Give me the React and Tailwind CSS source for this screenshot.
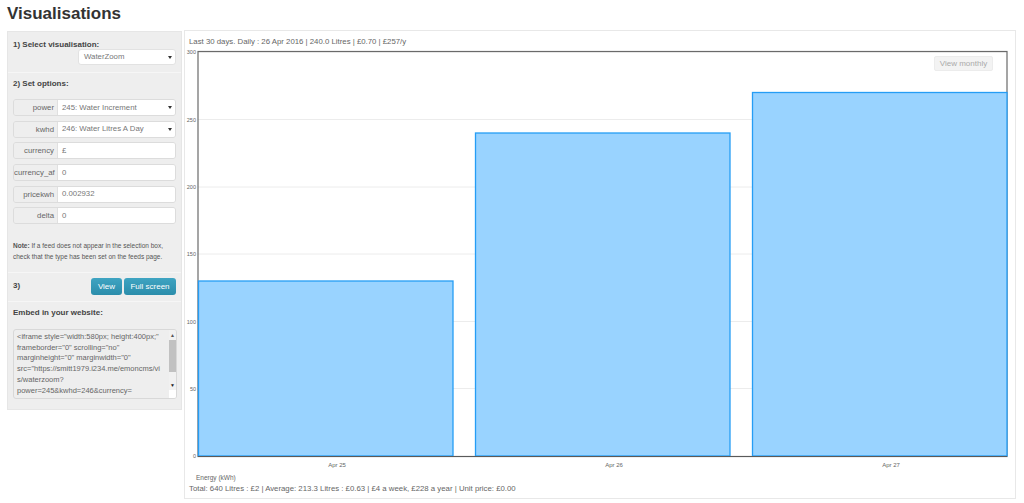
const FONT = "font-['Liberation_Sans',Arial,sans-serif]";

const options = [
  { label: "power", value: "245: Water Increment", select: true },
  { label: "kwhd", value: "246: Water Litres A Day", select: true },
  { label: "currency", value: "£" },
  { label: "currency_af", value: "0" },
  { label: "pricekwh", value: "0.002932" },
  { label: "delta", value: "0" },
];

const bars = [
  { x: 198.5, y: 281, label: "Apr 25", lx: 337 },
  { x: 475.5, y: 133, label: "Apr 26", lx: 614 },
  { x: 752.5, y: 92.5, label: "Apr 27", lx: 891 },
];

const ticks = [
  { v: 300, y: 52 },
  { v: 250, y: 119.5 },
  { v: 200, y: 187 },
  { v: 150, y: 254 },
  { v: 100, y: 321.5 },
  { v: 50, y: 388.5 },
];

function Caret() {
  return <span className="w-0 h-0 border-x-[2.5px] border-x-transparent border-t-[3.5px] border-t-[#333]" />;
}

function OptionRow({ label, value, select }) {
  return (
    <div className="flex h-[17px] w-[163px] rounded-[3px] border border-[#dcdcdc] overflow-hidden">
      <div className="w-[44px] shrink-0 bg-[#eeeeee] border-r border-[#e0e0e0] text-right pr-[3px] text-[7.8px] leading-[15px] text-[#666] overflow-hidden whitespace-nowrap">
        {label}
      </div>
      <div className="flex-1 bg-white flex items-center justify-between pl-[4px] pr-[3px] text-[7.8px] text-[#777]">
        <span>{value}</span>
        {select && <Caret />}
      </div>
    </div>
  );
}

function Sidebar() {
  return (
    <aside className="w-[175px] shrink-0 h-[379px] mt-[1px] bg-[#eeeeee] border border-[#e6e6e6] text-[#444]">
      <section className="h-[41px] border-b border-[#f6f6f6] pl-[5px] pr-[5px] pt-[8px]">
        <div className="text-[8px] leading-[10px] font-bold">1) Select visualisation:</div>
        <div className="ml-[65px] mt-[-1px] h-[16px] bg-white border border-[#e2e2e2] rounded-[3px] flex items-center justify-between pl-[5px] pr-[3px] text-[7.8px] text-[#777]">
          <span>WaterZoom</span>
          <Caret />
        </div>
      </section>
      <section className="h-[200px] border-b border-[#f6f6f6] pl-[5px] pt-[6px]">
        <div className="text-[8px] leading-[10px] font-bold">2) Set options:</div>
        <div className="mt-[10px] flex flex-col gap-[4.7px]">
          {options.map((o) => (
            <OptionRow key={o.label} {...o} />
          ))}
        </div>
        <p className="mt-[16px] text-[6.5px] leading-[11px] text-[#555] w-[165px]">
          <b>Note:</b> If a feed does not appear in the selection box, check that the type has been set on the feeds page.
        </p>
      </section>
      <section className="pl-[5px] pr-[5px] pt-[5px] h-[28px] flex justify-between">
        <span className="text-[8px] font-bold leading-[16px]">3)</span>
        <div className="flex gap-[2px]">
          <button className="w-[31px] h-[17px] rounded-[3px] bg-gradient-to-b from-[#3fa4c2] to-[#2b8dab] text-white text-[8px]">View</button>
          <button className="w-[52px] h-[17px] rounded-[3px] bg-gradient-to-b from-[#3fa4c2] to-[#2b8dab] text-white text-[8px]">Full screen</button>
        </div>
      </section>
      <section className="border-t border-[#f6f6f6] pl-[5px] pt-[6px]">
        <div className="text-[8px] leading-[10px] font-bold">Embed in your website:</div>
        <div className="mt-[11px] w-[164px] h-[70px] rounded-[3px] border border-[#d8d8d8] flex overflow-hidden">
          <div className="w-[156px] pl-[3px] pt-[2px] text-[7.5px] leading-[10.7px] text-[#666] break-all overflow-hidden">
            &lt;iframe style="width:580px; height:400px;"
            <br />frameborder="0" scrolling="no"
            <br />marginheight="0" marginwidth="0"
            <br />src="https://smitt1979.i234.me/emoncms/vi
            <br />s/waterzoom?
            <br />power=245&amp;kwhd=246&amp;currency=
          </div>
          <div className="w-[7px] bg-[#f1f1f1] flex flex-col">
            <div className="h-[10px] flex items-center justify-center text-[5px] leading-none text-[#555]">▲</div>
            <div className="h-[32px] bg-[#c1c1c1]" />
            <div className="flex-1 pt-[11px] flex justify-center text-[5px] leading-none text-[#222]">▼</div>
            <div className="h-[8px] bg-white" />
          </div>
        </div>
      </section>
    </aside>
  );
}

function Chart() {
  // coordinates here match the page: panel starts at 184,30
  return (
    <svg width="830" height="426" viewBox="185 47 830 426" className="block">
      {ticks.map((t) => (
        <line key={t.v} x1="198" x2="1007" y1={t.y} y2={t.y} stroke="#ececec" />
      ))}
      <rect x="198" y="51.5" width="809" height="405" fill="none" stroke="#6a6a6a" strokeWidth="1.2" />
      {bars.map((b) => (
        <rect key={b.label} x={b.x} y={b.y} width="254.5" height={456 - b.y} fill="#99d3ff" stroke="#259df5" strokeWidth="1.3" />
      ))}
      <line x1="198" x2="1007" y1="456.5" y2="456.5" stroke="#5a5a5a" strokeWidth="1.2" />
      {ticks.concat({ v: 0, y: 456 }).map((t) => (
        <text key={t.v} x="196" y={t.y + 2} textAnchor="end" fontSize="5.5" fill="#666">
          {t.v}
        </text>
      ))}
      {bars.map((b) => (
        <text key={b.label} x={b.lx} y="467" textAnchor="middle" fontSize="6" fill="#666">
          {b.label}
        </text>
      ))}
    </svg>
  );
}

export default function App() {
  return (
    <div className={`w-[1024px] h-[503px] bg-white overflow-hidden ${FONT}`}>
      <h1 className="pl-[7px] pt-[4px] h-[30px] text-[17px] leading-[20px] font-bold text-[#333]">Visualisations</h1>
      <div className="flex pl-[7px] gap-[2px]">
        <Sidebar />
        <main className="relative w-[832px] h-[469px] border border-[#e8e8e8] text-[7.8px] text-[#666]">
          <div className="pl-[4px] pt-[6px] h-[16px] leading-[10px]">Last 30 days. Daily : 26 Apr 2016 | 240.0 Litres | £0.70 | £257/y</div>
          <Chart />
          <button className="absolute left-[749px] top-[25px] w-[59px] h-[15px] rounded-[2px] bg-[#f3f3f3] border border-[#ececec] text-[8px] text-[#aaa]">
            View monthly
          </button>
          <div className="pl-[11px] pt-[1px] text-[6.5px] leading-[8px] text-[#666] h-[11px]">Energy (kWh)</div>
          <div className="pl-[4px] leading-[10px]">Total: 640 Litres : £2 | Average: 213.3 Litres : £0.63 | £4 a week, £228 a year | Unit price: £0.00</div>
        </main>
      </div>
    </div>
  );
}
